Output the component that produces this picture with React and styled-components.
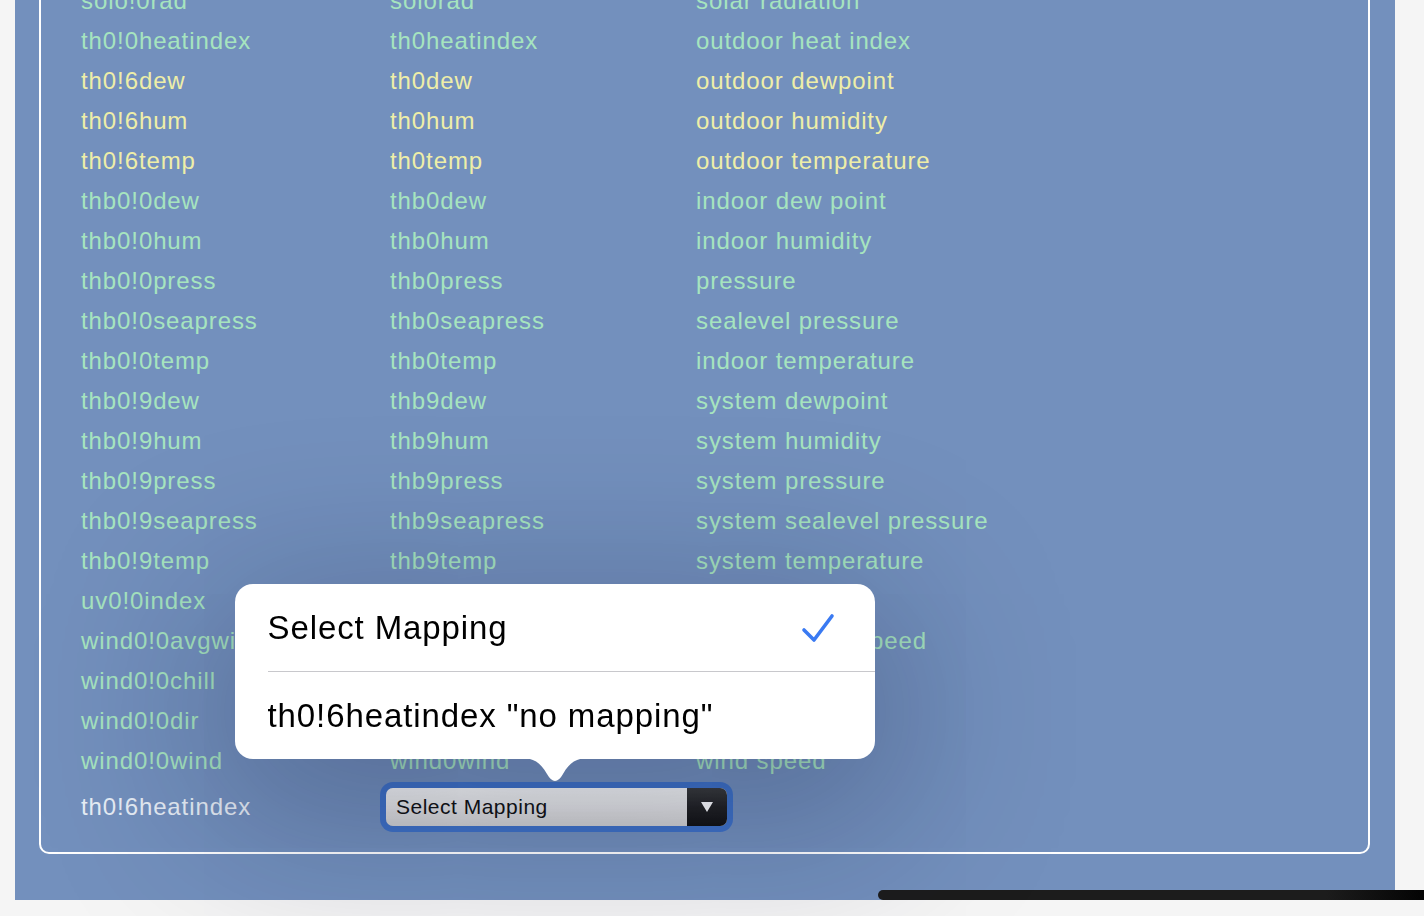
import React from "react";
import styled, { createGlobalStyle } from "styled-components";

const GlobalStyle = createGlobalStyle`
  html, body {
    margin: 0;
    padding: 0;
    background: #f5f5f5;
    font-family: "Liberation Sans", Arial, sans-serif;
    overflow: hidden;
  }
`;

const Page = styled.div`
  width: 1424px;
  height: 916px;
  padding-left: 15px;
  box-sizing: border-box;
  overflow: hidden;
`;

const Panel = styled.div`
  width: 1380px;
  margin-top: -60px;
  padding: 20px 25px 46px 24px;
  box-sizing: border-box;
  background: #7390bd;
`;

const FieldBox = styled.div`
  border: 2px solid #ffffff;
  border-radius: 10px;
  padding: 19px 40px 19px 40px;
`;

const Row = styled.div`
  display: grid;
  grid-template-columns: 309px 306px 1fr;
  height: 40px;
  line-height: 40px;
  font-size: 24px;
  letter-spacing: 0.9px;
  color: ${(p) => (p.$tone === "yellow" ? "#eeeea8" : "#a6e4bf")};
  white-space: nowrap;
`;

const Cell = styled.div`
  overflow: visible;
`;

const FormRow = styled.div`
  display: grid;
  grid-template-columns: 305px 1fr;
  align-items: center;
  height: 52px;
`;

const FormLabel = styled.div`
  font-size: 24px;
  line-height: 40px;
  letter-spacing: 0.9px;
  color: #e6edf5;
`;

const SelectAnchor = styled.div`
  position: relative;
  width: 341px;
  height: 38px;
  border-radius: 7px;
  box-shadow: 0 0 0 6px #3f72c8;
`;

const SelectBox = styled.div`
  display: flex;
  align-items: stretch;
  width: 100%;
  height: 100%;
  border-radius: 7px;
  overflow: hidden;
  background: linear-gradient(to bottom, #f6f6f6 0%, #e9e9e9 45%, #d2d2d2 100%);
`;

const SelectText = styled.div`
  flex: 1;
  padding-left: 10px;
  font-size: 21px;
  letter-spacing: 0.5px;
  line-height: 38px;
  color: #111;
`;

const SelectButton = styled.div`
  width: 40px;
  display: flex;
  align-items: center;
  justify-content: center;
  background: linear-gradient(to bottom, #3a3a3a 0%, #222 50%, #111 100%);
`;

const Popup = styled.div`
  position: absolute;
  left: 50%;
  bottom: calc(100% + 29px);
  transform: translateX(calc(-50% - 2px));
  width: 640px;
  background: #ffffff;
  border-radius: 18px;
  box-shadow: 0 40px 170px 30px rgba(10, 20, 50, 0.27);
  padding-left: 33px;
  box-sizing: border-box;
  z-index: 5;
`;

const PopupItem = styled.div`
  display: flex;
  align-items: center;
  justify-content: space-between;
  height: 87px;
  padding-right: 40px;
  font-size: 33px;
  letter-spacing: 0.9px;
  color: #000;
  border-top: ${(p) => (p.$divider ? "1px solid #c8c8cc" : "none")};
`;

const PopupArrow = styled.svg`
  position: absolute;
  left: 50%;
  top: 100%;
  margin-top: -1px;
  transform: translateX(-50%);
  display: block;
`;

const ScrollIndicator = styled.div`
  position: fixed;
  left: 878px;
  top: 890px;
  width: 560px;
  height: 10px;
  border-radius: 5px 0 0 5px;
  background: linear-gradient(to right, #1c1c1c 80%, #000 100%);
`;

const rows = [
  ["solo!0rad", "solorad", "solar radiation", "green"],
  ["th0!0heatindex", "th0heatindex", "outdoor heat index", "green"],
  ["th0!6dew", "th0dew", "outdoor dewpoint", "yellow"],
  ["th0!6hum", "th0hum", "outdoor humidity", "yellow"],
  ["th0!6temp", "th0temp", "outdoor temperature", "yellow"],
  ["thb0!0dew", "thb0dew", "indoor dew point", "green"],
  ["thb0!0hum", "thb0hum", "indoor humidity", "green"],
  ["thb0!0press", "thb0press", "pressure", "green"],
  ["thb0!0seapress", "thb0seapress", "sealevel pressure", "green"],
  ["thb0!0temp", "thb0temp", "indoor temperature", "green"],
  ["thb0!9dew", "thb9dew", "system dewpoint", "green"],
  ["thb0!9hum", "thb9hum", "system humidity", "green"],
  ["thb0!9press", "thb9press", "system pressure", "green"],
  ["thb0!9seapress", "thb9seapress", "system sealevel pressure", "green"],
  ["thb0!9temp", "thb9temp", "system temperature", "green"],
  ["uv0!0index", "uv0index", "uv index", "green"],
  ["wind0!0avgwind", "wind0avgwind", "average wind speed", "green"],
  ["wind0!0chill", "wind0chill", "wind chill", "green"],
  ["wind0!0dir", "wind0dir", "wind direction", "green"],
  ["wind0!0wind", "wind0wind", "wind speed", "green"],
];

export default function App() {
  return (
    <>
      <GlobalStyle />
      <Page>
        <Panel>
          <FieldBox>
            {rows.map(([a, b, c, tone]) => (
              <Row key={a} $tone={tone}>
                <Cell>{a}</Cell>
                <Cell>{b}</Cell>
                <Cell>{c}</Cell>
              </Row>
            ))}
            <FormRow>
              <FormLabel>th0!6heatindex</FormLabel>
              <SelectAnchor>
                <SelectBox>
                  <SelectText>Select Mapping</SelectText>
                  <SelectButton>
                    <svg width="14" height="12" viewBox="0 0 14 12">
                      <path d="M1 1 L13 1 L7 11 Z" fill="#ffffff" />
                    </svg>
                  </SelectButton>
                </SelectBox>
                <Popup>
                  <PopupItem>
                    <span>Select Mapping</span>
                    <svg width="34" height="34" viewBox="0 0 34 34">
                      <path
                        d="M3 19 L13 29 L31 5"
                        fill="none"
                        stroke="#3a7af2"
                        strokeWidth="3.6"
                        strokeLinecap="round"
                        strokeLinejoin="round"
                      />
                    </svg>
                  </PopupItem>
                  <PopupItem $divider>
                    <span>th0!6heatindex "no mapping"</span>
                  </PopupItem>
                  <PopupArrow width="70" height="28" viewBox="0 0 70 28">
                    <path
                      d="M0 0 C14 0 20 4 27 16 Q35 30 43 16 C50 4 56 0 70 0 Z"
                      fill="#ffffff"
                    />
                  </PopupArrow>
                </Popup>
              </SelectAnchor>
            </FormRow>
          </FieldBox>
        </Panel>
      </Page>
      <ScrollIndicator />
    </>
  );
}
